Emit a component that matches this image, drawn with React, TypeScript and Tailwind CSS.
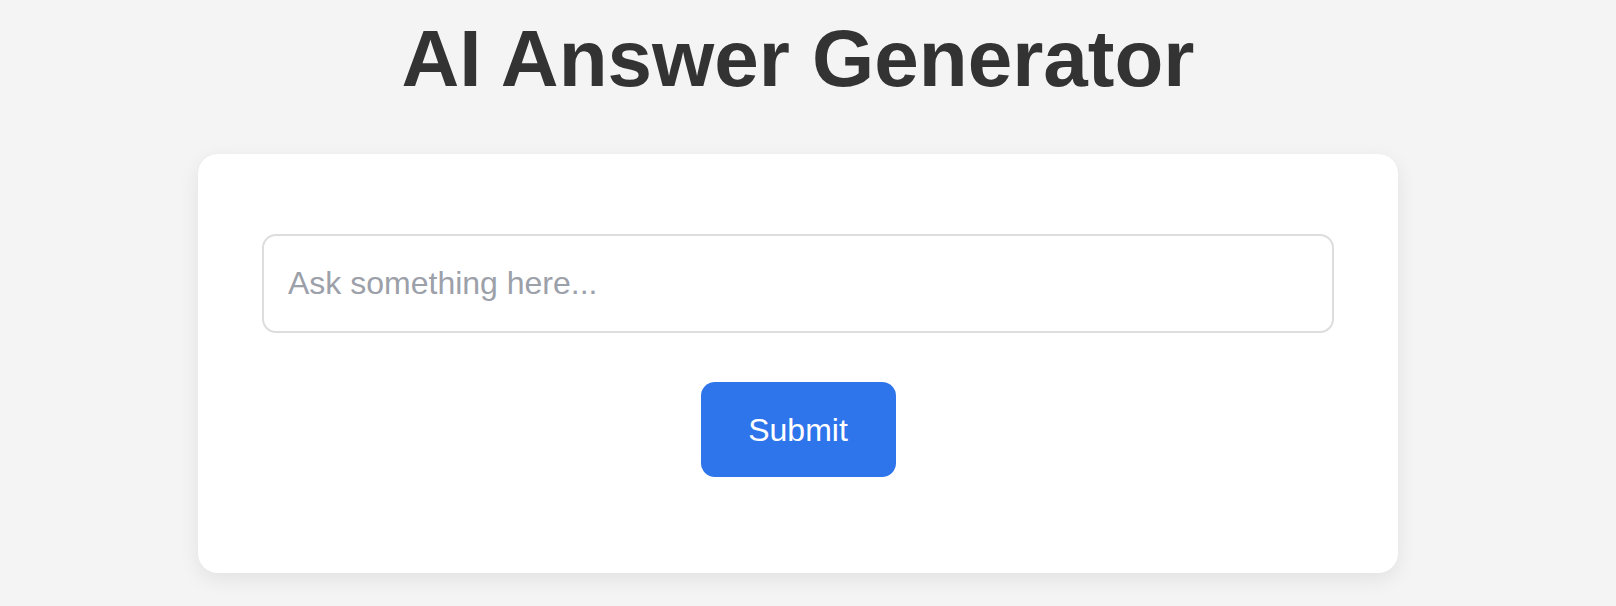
export default function App() {
  return (
    <div className="min-h-screen bg-[#f4f4f4] font-['Liberation_Sans',Arial,sans-serif]">
      <div className="flex w-[1596px] flex-col items-center pt-[13px]">
        <h1 className="text-[80px] font-bold leading-[92px] text-[#333333]">
          AI Answer Generator
        </h1>
        <div className="mt-[49px] flex w-[1200px] flex-col items-center rounded-[20px] bg-white px-16 pb-[96px] pt-[80px] shadow-[0_6px_20px_rgba(0,0,0,0.08)]">
          <input
            type="text"
            placeholder="Ask something here..."
            className="h-[99px] w-full rounded-[14px] border-2 border-[#dddddd] px-6 text-[32px] text-[#333333] outline-none placeholder:text-[#9ca0a9]"
          />
          <button className="mt-[49px] h-[95px] w-[195px] rounded-[14px] bg-[#2e74ea] text-[32px] text-white">
            Submit
          </button>
        </div>
      </div>
    </div>
  );
}
